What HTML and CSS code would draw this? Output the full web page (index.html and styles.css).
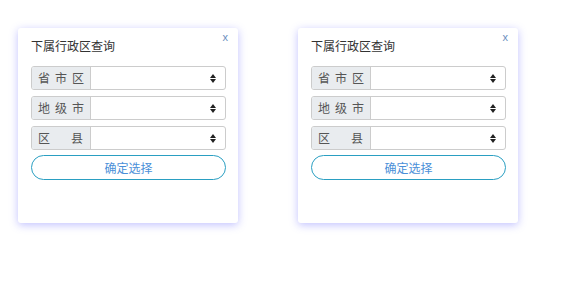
FILE: index.html
```html
<!DOCTYPE html>
<html>
<head>
  <title>下属行政区查询</title>
  <link rel="stylesheet" href="styles.css">
</head>
<body>
  <div class="wrap">
    <div class="panel">
      <span class="close">x</span>
      <div class="panel-title">下属行政区查询</div>
      <div class="group">
        <span class="addon">省市区</span>
        <div class="select"><svg class="arrows" width="6" height="9" viewBox="0 0 6 9"><path d="M0 4L3 0L6 4Z M0 5L3 9L6 5Z" fill="#222"/></svg></div>
      </div>
      <div class="group">
        <span class="addon">地级市</span>
        <div class="select"><svg class="arrows" width="6" height="9" viewBox="0 0 6 9"><path d="M0 4L3 0L6 4Z M0 5L3 9L6 5Z" fill="#222"/></svg></div>
      </div>
      <div class="group">
        <span class="addon addon-wide"><span>区</span><span>县</span></span>
        <div class="select"><svg class="arrows" width="6" height="9" viewBox="0 0 6 9"><path d="M0 4L3 0L6 4Z M0 5L3 9L6 5Z" fill="#222"/></svg></div>
      </div>
      <button class="confirm-btn">确定选择</button>
    </div>

    <div class="panel">
      <span class="close">x</span>
      <div class="panel-title">下属行政区查询</div>
      <div class="group">
        <span class="addon">省市区</span>
        <div class="select"><svg class="arrows" width="6" height="9" viewBox="0 0 6 9"><path d="M0 4L3 0L6 4Z M0 5L3 9L6 5Z" fill="#222"/></svg></div>
      </div>
      <div class="group">
        <span class="addon">地级市</span>
        <div class="select"><svg class="arrows" width="6" height="9" viewBox="0 0 6 9"><path d="M0 4L3 0L6 4Z M0 5L3 9L6 5Z" fill="#222"/></svg></div>
      </div>
      <div class="group">
        <span class="addon addon-wide"><span>区</span><span>县</span></span>
        <div class="select"><svg class="arrows" width="6" height="9" viewBox="0 0 6 9"><path d="M0 4L3 0L6 4Z M0 5L3 9L6 5Z" fill="#222"/></svg></div>
      </div>
      <button class="confirm-btn">确定选择</button>
    </div>
  </div>
</body>
</html>
```

FILE: styles.css
```css
body {
  margin: 0;
  background-color: #fff;
  font-family: "Noto Sans CJK SC", "Liberation Sans", sans-serif;
  color: #333;
}

.wrap {
  display: flex;
  gap: 60px;
  padding: 28px 0 30px 18px;
}

.panel {
  position: relative;
  width: 220px;
  height: 195px;
  box-sizing: border-box;
  padding: 9px 12px 0 13px;
  background-color: #fff;
  border-radius: 3px;
  box-shadow: 0 2px 8px rgba(100, 100, 255, 0.4);
}

.close {
  position: absolute;
  top: 3px;
  right: 10px;
  font-family: "Liberation Sans", sans-serif;
  font-size: 11px;
  color: #6b8fc0;
}

.panel-title {
  font-size: 12px;
  line-height: 18px;
  margin-bottom: 11px;
  color: #333;
}

.group {
  display: flex;
  height: 24px;
  margin-bottom: 6px;
  box-sizing: border-box;
  border: 1px solid #ccc;
  border-radius: 3px;
  overflow: hidden;
}

.addon {
  width: 59px;
  box-sizing: border-box;
  padding: 0 0 0 6px;
  background-color: #e9ecef;
  border-right: 1px solid #ccc;
  font-size: 12px;
  letter-spacing: 5px;
  line-height: 22px;
  color: #555;
}

.addon-wide {
  display: flex;
  justify-content: space-between;
  padding-right: 2px;
}

.select {
  flex: 1;
  display: flex;
  justify-content: flex-end;
  align-items: center;
  padding-right: 9px;
}

.confirm-btn {
  display: block;
  width: 100%;
  height: 25px;
  margin-top: -1px;
  padding: 0;
  background-color: #fff;
  border: 1px solid #2a9fc2;
  border-radius: 13px;
  font-family: "Noto Sans CJK SC", sans-serif;
  font-size: 12px;
  color: #4a8fd8;
}
```
